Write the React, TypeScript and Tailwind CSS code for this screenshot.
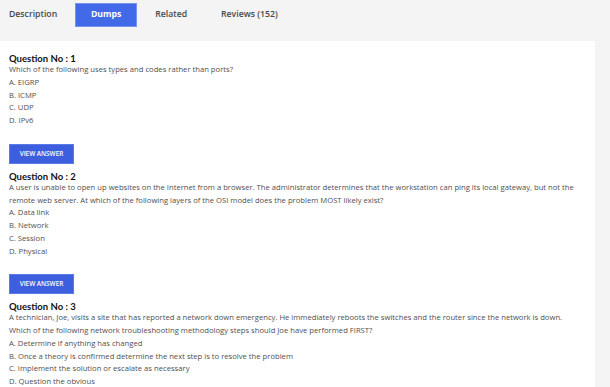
import React from 'react';

const questions = [
  {
    no: 1,
    text: ['Which of the following uses types and codes rather than ports?'],
    options: ['A. EIGRP', 'B. ICMP', 'C. UDP', 'D. IPv6'],
  },
  {
    no: 2,
    text: [
      'A user is unable to open up websites on the Internet from a browser. The administrator determines that the workstation can ping its local gateway, but not the',
      'remote web server. At which of the following layers of the OSI model does the problem MOST likely exist?',
    ],
    options: ['A. Data link', 'B. Network', 'C. Session', 'D. Physical'],
  },
  {
    no: 3,
    text: [
      'A technician, Joe, visits a site that has reported a network down emergency. He immediately reboots the switches and the router since the network is down.',
      'Which of the following network troubleshooting methodology steps should Joe have performed FIRST?',
    ],
    options: [
      'A. Determine if anything has changed',
      'B. Once a theory is confirmed determine the next step is to resolve the problem',
      'C. Implement the solution or escalate as necessary',
      'D. Question the obvious',
    ],
  },
];

export default function App() {
  return (
    <div className="w-[610px] h-[387px] overflow-hidden bg-[#f4f4f4] font-['Open_Sans',sans-serif]">
      <div className="h-[41px] pt-[3px] pl-[9px]">
        <div className="flex items-center h-[24px] text-[8.7px] font-semibold text-[#484848]">
          <span>Description</span>
          <span className="w-[62px] h-[24px] mx-[18px] flex items-center justify-center bg-[#4169e8] border border-[#7593f0] text-white font-bold">
            Dumps
          </span>
          <span className="mr-[34px]">Related</span>
          <span>Reviews (152)</span>
        </div>
      </div>
      <div className="flex h-[346px]">
        <div className="w-[595px] bg-white pl-[9px] pt-[14px]">
          {questions.map((q) => (
            <div key={q.no}>
              <h3 className="font-['Lato',sans-serif] font-bold text-[9.5px] leading-[8px] text-[#111]">
                Question No : {q.no}
              </h3>
              <div className="text-[7.66px] leading-[12.75px] text-[#505050]">
                {q.text.map((line) => (
                  <p key={line} className="whitespace-nowrap">
                    {line}
                  </p>
                ))}
                {q.options.map((o) => (
                  <p key={o} className="whitespace-nowrap">
                    {o}
                  </p>
                ))}
              </div>
              <button className="mt-[17px] mb-[9px] w-[65px] h-[20px] bg-[#3d5fde] border border-[#5a7ae6] text-white text-[6.4px] font-semibold">
                VIEW ANSWER
              </button>
            </div>
          ))}
        </div>
      </div>
    </div>
  );
}
